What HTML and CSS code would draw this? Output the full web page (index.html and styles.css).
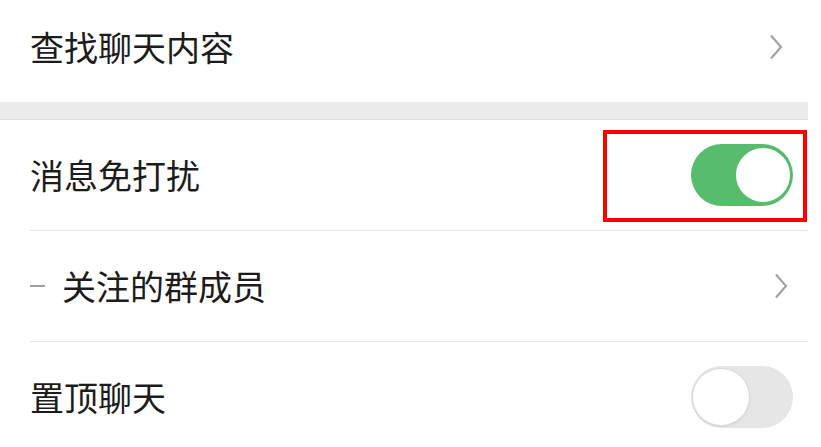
FILE: index.html
```html
<!DOCTYPE html>
<html lang="zh-CN">
<head>
    <meta charset="UTF-8">
    <meta name="viewport" content="width=device-width, initial-scale=1.0">
    <title>聊天信息</title>
    <link rel="stylesheet" href="styles.css">
</head>
<body>
    <div class="page">
        <div class="group first">
            <div class="cell no-line">
                <span class="label">查找聊天内容</span>
                <svg class="arrow" width="14" height="26" viewBox="0 0 14 26">
                    <polyline points="2,1.5 12,13 2,24.5" fill="none" stroke="#a3a3a3" stroke-width="2.2"/>
                </svg>
            </div>
        </div>

        <div class="gap"></div>

        <div class="group">
            <div class="cell">
                <span class="label">消息免打扰</span>
                <span class="switch on"><span class="knob"></span></span>
                <span class="mark"></span>
            </div>
            <div class="cell">
                <span class="label"><span class="dash"></span>关注的群成员</span>
                <svg class="arrow" width="14" height="26" viewBox="0 0 14 26">
                    <polyline points="2,1.5 12,13 2,24.5" fill="none" stroke="#a3a3a3" stroke-width="2.2"/>
                </svg>
            </div>
            <div class="cell">
                <span class="label">置顶聊天</span>
                <span class="switch"><span class="knob"></span></span>
            </div>
        </div>
    </div>
</body>
</html>
```

FILE: styles.css
```css
body {
    margin: 0;
    background-color: #fff;
    font-family: "Noto Sans CJK SC", "Noto Sans", sans-serif;
    color: #1c1c1c;
    overflow: hidden;
}
.page {
    width: 808px;
}
.group {
    background-color: #fff;
}
.group.first {
    margin-top: -9px;
}
.cell {
    position: relative;
    height: 110px;
    margin-left: 30px;
    padding-right: 15px;
    display: flex;
    align-items: center;
    justify-content: space-between;
    border-bottom: 1px solid #e3e3e3;
}
.cell.no-line {
    height: 111px;
    border-bottom: none;
    padding-right: 20px;
}
.label {
    display: flex;
    align-items: center;
    font-size: 34px;
    line-height: 1;
}
.dash {
    display: inline-block;
    width: 15px;
    height: 2px;
    margin-right: 17px;
    background-color: #a0a0a0;
}
.arrow {
    display: block;
    margin-right: 5px;
}
.gap {
    height: 17px;
    background-color: #ebebeb;
    border-bottom: 1px solid #dedede;
}
.switch {
    position: relative;
    display: block;
    width: 102px;
    height: 62px;
    border-radius: 31px;
    background-color: #e6e6e6;
    box-sizing: border-box;
}
.switch .knob {
    position: absolute;
    top: 2px;
    left: 1px;
    width: 58px;
    height: 58px;
    box-sizing: border-box;
    border-radius: 50%;
    background-color: #fff;
    border: 1px solid #dadada;
    box-shadow: 0 1px 2px rgba(0, 0, 0, 0.08);
}
.switch.on {
    background-color: #57bc6b;
}
.switch.on .knob {
    left: auto;
    right: 1px;
    top: 2px;
    border: 2px solid #57bc6b;
    box-shadow: none;
}
.mark {
    position: absolute;
    top: 10px;
    left: 573px;
    width: 204px;
    height: 92px;
    box-sizing: border-box;
    border: 4px solid #ff0000;
}
```
